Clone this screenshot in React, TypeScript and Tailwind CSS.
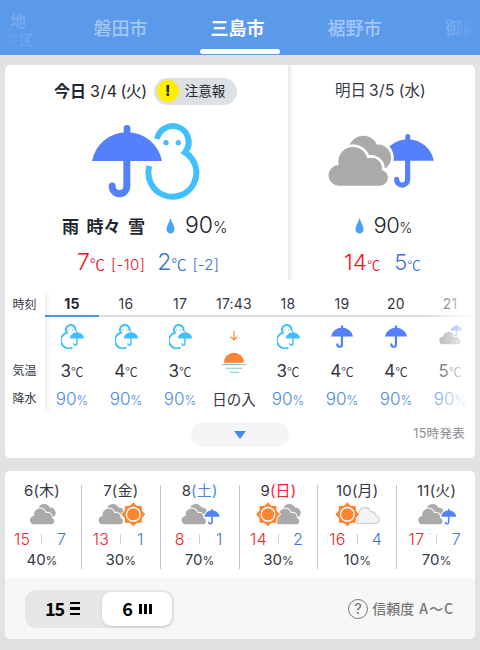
import type { ReactNode } from "react";

const SANS = "font-['Inter','Noto_Sans_CJK_JP',sans-serif]";
const CJK = "font-['Noto_Sans_CJK_JP',sans-serif]";

// Umbrella on a 210 x 218 box
function Umbrella({ x = 0, y = 0, s = 1, color = "#5580fd", outline = 0 }: {
  x?: number;
  y?: number;
  s?: number;
  color?: string;
  outline?: number;
}) {
  const canopy = "M0 109 A107 107 0 0 1 210 109Z";
  const pole = "M104.5 100 V185 a22 22 0 0 1 -44 0 V184";
  return (
    <g transform={`translate(${x} ${y}) scale(${s})`} strokeLinecap="round" fill="none">
      {outline > 0 && (
        <g stroke="#fff">
          <path d={canopy} fill="#fff" strokeWidth={outline * 2} />
          <path d={pole} strokeWidth={21 + outline * 2} />
        </g>
      )}
      <path d={canopy} fill={color} />
      <path d="M105 11 V40" stroke={color} strokeWidth="20" />
      <path d={pole} stroke={color} strokeWidth="21" />
    </g>
  );
}

// Double cloud on a 192 x 149 box
function Clouds({ x = 0, y = 0, s = 1, gap = 16 }: { x?: number; y?: number; s?: number; gap?: number }) {
  const front =
    "M31 149 A31 31 0 0 1 30 87 A44 44 0 0 1 116 67 A33 33 0 0 1 160 102 A24 24 0 0 1 156 149Z";
  return (
    <g transform={`translate(${x} ${y}) scale(${s})`} fill="#aaa">
      <path
        d="M60 34 A45 45 0 0 1 145 26 A39 39 0 0 1 172 96 L100 96Z"
        stroke="#fff"
        strokeWidth={gap}
        paintOrder="stroke"
      />
      <path d={front} stroke="#fff" strokeWidth={gap} paintOrder="stroke" />
    </g>
  );
}

// Sun centred on x, y with a radius of 36
function Sun({ x, y }: { x: number; y: number }) {
  return (
    <g transform={`translate(${x} ${y})`} fill="#fd8430">
      <path
        d="M0 -36 L10 -26 L25 -25 L26 -10 L36 0 L26 10 L25 25 L10 26 L0 36 L-10 26 L-25 25 L-26 10 L-36 0 L-26 -10 L-25 -25 L-10 -26Z"
        stroke="#fff"
        strokeWidth="5"
        paintOrder="stroke"
      />
      <circle r="20.5" fill="none" stroke="#fff" strokeWidth="4" />
    </g>
  );
}

function SnowUmbrella() {
  return (
    <svg className="ml-[2px]" width="24" height="25" viewBox="182 116 72 75">
      <path
        d="M225 137 A14.3 14.3 0 1 0 200 142 A24 24 0 1 0 216 187"
        fill="none"
        stroke="#42bffd"
        strokeWidth="6"
      />
      <circle cx="205.500" cy="134" r="2" fill="#42bffd" />
      <circle cx="216.500" cy="134" r="2" fill="#42bffd" />
      <Umbrella x={208} y={137} s={0.208} color="#42bffd" outline={9} />
    </svg>
  );
}

function RainIcon() {
  return (
    <svg width="22" height="23" viewBox="0 0 210 218">
      <Umbrella />
    </svg>
  );
}

function Sunset() {
  return (
    <svg width="26" height="45" viewBox="662 130 78 135" fill="none" strokeLinecap="round">
      <path d="M701 137 V163 M692 154 L701 163 L710 154" stroke="#fd8430" strokeWidth="3.5" />
      <path d="M671 231 A30 30 0 0 1 731 231Z" fill="#fd8430" />
      <path d="M666 236.500 H736 M677 248 H725 M689 259.500 H715" stroke="#7cc9dc" strokeWidth="3.2" />
    </svg>
  );
}

function CloudThenRain() {
  return (
    <svg className="mt-[-4px]" width="23" height="21" viewBox="596 115 70 63">
      <path d="M609 176 A11.500 11.500 0 0 1 608 153 A18 18 0 0 1 641 147 A13 13 0 0 1 655 158 A9.300 9.300 0 0 1 655 176Z" fill="#9d9d9d" />
      <Umbrella x={632} y={116} s={0.165} outline={15} />
    </svg>
  );
}

function Drop() {
  return (
    <svg width="9" height="16" viewBox="0 0 9 16">
      <path d="M4.500 0 C5.500 4 8.500 7.500 8.500 11.200 A4 4.300 0 0 1 0.500 11.200 C0.500 7.500 3.500 4 4.500 0Z" fill="#45a4f2" />
    </svg>
  );
}

const hours: { time: string; icon: ReactNode; temp?: number }[] = [
  { time: "15", icon: <SnowUmbrella />, temp: 3 },
  { time: "16", icon: <SnowUmbrella />, temp: 4 },
  { time: "17", icon: <SnowUmbrella />, temp: 3 },
  { time: "17:43", icon: <Sunset /> },
  { time: "18", icon: <SnowUmbrella />, temp: 3 },
  { time: "19", icon: <RainIcon />, temp: 4 },
  { time: "20", icon: <RainIcon />, temp: 4 },
  { time: "21", icon: <CloudThenRain />, temp: 5 },
];

interface Day {
  date: string;
  weekday: string;
  color?: string;
  icon: ReactNode;
  high: number;
  low: number;
  rain: number;
}

// Daily icons share a 150 x 75 box, drawn at a third of its size
const days: Day[] = [
  { date: "6", weekday: "木", icon: <Clouds x={39} y={6} s={0.41} />, high: 15, low: 7, rain: 40 },
  {
    date: "7",
    weekday: "金",
    icon: (
      <>
        <Clouds x={8} y={6} s={0.41} />
        <Sun x={112} y={37} />
      </>
    ),
    high: 13,
    low: 1,
    rain: 30,
  },
  {
    date: "8",
    weekday: "土",
    color: "text-[#4f86e6]",
    icon: (
      <>
        <Clouds x={20} y={6} s={0.41} />
        <Umbrella x={88} y={20} s={0.22} outline={14} />
      </>
    ),
    high: 8,
    low: 1,
    rain: 70,
  },
  {
    date: "9",
    weekday: "日",
    color: "text-[#f5222d]",
    icon: (
      <>
        <Clouds x={66} y={6} s={0.41} />
        <Sun x={45} y={37} />
      </>
    ),
    high: 14,
    low: 2,
    rain: 30,
  },
  {
    date: "10",
    weekday: "月",
    icon: (
      <>
        <path
          d="M75 64 H129 A11.500 11.500 0 0 0 132 41 A14 14 0 0 0 116 29 A18 18 0 0 0 82 28Z"
          fill="#f3f3f3"
          stroke="#d2d2d2"
          strokeWidth="4"
        />
        <Sun x={46} y={37} />
      </>
    ),
    high: 16,
    low: 4,
    rain: 10,
  },
  {
    date: "11",
    weekday: "火",
    icon: (
      <>
        <Clouds x={19} y={6} s={0.41} />
        <Umbrella x={87} y={20} s={0.22} outline={14} />
      </>
    ),
    high: 17,
    low: 7,
    rain: 70,
  },
];

function CityTabs() {
  return (
    <header className={`flex h-[55px] overflow-hidden bg-[#5b9aea] text-[18px] font-medium whitespace-nowrap text-white ${CJK}`}>
      <div className="flex w-[62px] shrink-0 flex-col pt-[11px] pl-[10px] text-[#78aaf0]">
        <span className="h-[19px] text-[16px] leading-[19px]">地</span>
        <span className="-ml-[5px] h-[18px] bg-linear-to-r from-[#5b9aea] to-[#78aaf0] to-[26px] bg-clip-text text-[14px] leading-[18px] text-transparent">
          央区
        </span>
      </div>
      <div className="flex w-[117px] shrink-0 items-center justify-center pb-px text-[#a3c6f6]">磐田市</div>
      <div className="flex w-[117px] shrink-0 flex-col items-center">
        <span className="pt-[13px] leading-[29px] font-bold">三島市</span>
        <span className="mt-[7px] ml-[5px] h-[5px] w-[80px] rounded-[3px] bg-white" />
      </div>
      <div className="flex w-[117px] shrink-0 items-center justify-center pb-px text-[#a3c6f6]">裾野市</div>
      <div className="ml-[32px] flex shrink-0 items-center bg-linear-to-r from-[#83b3f2] to-[#5b9aea] to-[32px] bg-clip-text text-transparent">
        御殿場市
      </div>
    </header>
  );
}

function Today() {
  return (
    <section className="h-[215px] w-[283px]">
      <div className="flex h-[52px] items-center pl-[49px] text-[16px] text-[#22262e]">
        <span className="font-bold">今日</span>
        <span className="ml-[4px] tracking-[0.5px]">3/4</span>
        <span className="ml-[3px] tracking-[-0.5px]">(火)</span>
        <span className="ml-[7px] flex h-[27px] w-[83px] items-center rounded-full bg-[#dde1e4] pl-[3px] text-[13.5px]">
          <span className="flex size-[22px] items-center justify-center rounded-full bg-[#ffee00] text-[15px] font-extrabold">
            !
          </span>
          <span className="ml-[6px]">注意報</span>
        </span>
      </div>
      <div className="pt-[4.500px] pl-[85px]">
        <svg width="112" height="79" viewBox="270 50 336 237">
          <path
            d="M471 101 A48 48 0 1 1 555 141 A72 72 0 1 1 448 182"
            fill="none"
            stroke="#42bffd"
            strokeWidth="18"
          />
          <circle cx="498" cy="112" r="8" fill="#42bffd" />
          <circle cx="535" cy="112" r="8" fill="#42bffd" />
          <Umbrella x={276} y={58} />
        </svg>
      </div>
      <div className="mt-[8px] flex h-[34px] items-center pl-[57px]">
        <span className={`${CJK} flex w-[104px] gap-[7.500px] text-[17px] font-bold whitespace-nowrap text-[#22262e]`}>
          <span>雨</span>
          <span>時々</span>
          <span>雪</span>
        </span>
        <Drop />
        <span className="ml-[10px] text-[23px] font-light text-[#22262e]">
          90<span className="text-[15.500px]">%</span>
        </span>
      </div>
      <div className="flex h-[36px] items-baseline pt-[2px] pl-[72px] text-[23px] leading-[34px] font-light">
        <span className="text-[#f5101c]">7</span>
        <span className={`${CJK} text-[15px] leading-none font-[350] text-[#f5101c]`}>℃</span>
        <span className="ml-[6px] text-[15px] tracking-[0.4px] text-[#f5101c]">[-10]</span>
        <span className="ml-[12px] text-[#3d6fd0]">2</span>
        <span className={`${CJK} text-[15px] leading-none font-[350] text-[#3d6fd0]`}>℃</span>
        <span className="ml-[6px] text-[15px] tracking-[0.2px] text-[#3d6fd0]">[-2]</span>
      </div>
    </section>
  );
}

function Tomorrow() {
  return (
    <section className="h-[215px] w-[187px] bg-linear-to-r from-[#e9e9e9] to-white to-[6px]">
      <div className="flex h-[52px] items-center pl-[47px] text-[15.500px] text-[#33373f]">
        明日<span className="ml-[3px] tracking-[0.4px]">3/5</span>
        <span className="ml-[4px]">(水)</span>
      </div>
      <div className="pt-[14.500px] pl-[38.500px]">
        <svg width="109" height="59" viewBox="260 80 327 177">
          <Umbrella x={424} y={85} s={0.745} />
          <Clouds x={265} y={92} />
        </svg>
      </div>
      <div className="mt-[18px] flex h-[34px] items-center pl-[67px]">
        <Drop />
        <span className="ml-[9.500px] text-[22px] font-light tracking-[-0.5px] text-[#22262e]">
          90<span className="text-[14px]">%</span>
        </span>
      </div>
      <div className="flex h-[36px] items-baseline pt-[2px] pl-[56px] text-[22px] leading-[34px] font-light">
        <span className="tracking-[0.4px] text-[#f5101c]">14</span>
        <span className={`${CJK} text-[13px] leading-none font-[350] text-[#f5101c]`}>℃</span>
        <span className="ml-[14px] text-[#3d6fd0]">5</span>
        <span className={`${CJK} text-[13px] leading-none font-[350] text-[#3d6fd0]`}>℃</span>
      </div>
    </section>
  );
}

function HourlyTable() {
  return (
    <div className="relative mt-[13px] flex h-[119px] overflow-hidden text-[#33373f]">
      <div className={`${CJK} w-[40px] shrink-0 pl-[7.500px] text-[12px] leading-[22px]`}>
        <div className="h-[66px]">時刻</div>
        <div className="h-[28px]">気温</div>
        <div>降水</div>
      </div>
      <div className="flex bg-linear-to-r from-[#efefef] to-white to-[6px]">
        {hours.map((h, i) => (
          <div key={h.time} className="flex w-[54px] shrink-0 flex-col items-center">
            <div
              className={`h-[24px] w-full border-b-2 text-center text-[14px] leading-[22px] tracking-[0.2px] ${
                i === 0 ? "border-[#4f90ec] font-bold text-[#22262e]" : "border-[#dcdcdc]"
              }`}
            >
              {h.time}
            </div>
            {h.temp === undefined ? (
              <>
                <div className="mt-[12px] h-[45px]">{h.icon}</div>
                <div className={`${CJK} mt-[11px] text-[14.500px] leading-[28px]`}>日の入</div>
              </>
            ) : (
              <>
                <div className="flex h-[39px] items-center">{h.icon}</div>
                <div className="flex h-[30px] items-baseline text-[17px] leading-[30px]">
                  {h.temp}
                  <span className={`${CJK} text-[12.500px] font-[350]`}>℃</span>
                </div>
                <div className="flex h-[26px] items-baseline text-[17px] leading-[27px] font-light text-[#4a8ae6]">
                  90<span className="text-[12.500px]">%</span>
                </div>
              </>
            )}
          </div>
        ))}
      </div>
      <div className="absolute inset-y-0 right-0 w-[46px] bg-linear-to-r from-white/10 to-white to-[95%]" />
    </div>
  );
}

function WeeklyForecast() {
  return (
    <section className="mx-[5px] mt-[13px] h-[168px] overflow-hidden rounded-[5px] bg-[#f7f7f7]">
      <div className="h-[107px] bg-white pt-[14px]">
        <div className="-mr-px -ml-[2px] grid h-[79px] grid-cols-6 divide-x divide-[#c4c6ca]">
          {days.map((d) => (
            <div key={d.date} className="flex flex-col items-center text-[#33373f]">
              <div className="h-[17px] text-[15px] leading-[11px] tracking-[0.15px] whitespace-nowrap">
                {d.date}
                <span className={d.color}>({d.weekday})</span>
              </div>
              <svg width="50" height="25" viewBox="0 0 150 75">
                {d.icon}
              </svg>
              <div className="grid w-full grid-cols-[1fr_1px_1fr] items-center text-center text-[16px] leading-[24px] font-light tracking-[0.4px]">
                <span className="text-[#f5222d]">{d.high}</span>
                <span className="h-[10px] bg-[#cfd1d4]" />
                <span className="text-[#3d74da]">{d.low}</span>
              </div>
              <div className="text-[15px] leading-[17px]">
                {d.rain}
                <span className="text-[12px]">%</span>
              </div>
            </div>
          ))}
        </div>
      </div>
      <div className="flex h-[61px] items-center justify-between pr-[21px] pl-[20px]">
        <div className={`${CJK} flex h-[38px] w-[149px] rounded-[11px] bg-[#e6e6e7] p-[2px] text-[18px] font-bold text-black`}>
          <button className="flex w-[75px] items-center gap-[7px] pl-[18px]">
            <span className="w-[18px] tracking-[-1px]">15</span>
            <span className="flex flex-col gap-[3px]">
              <span className="h-[2.500px] w-[10px] bg-black" />
              <span className="h-[2.500px] w-[10px] bg-black" />
              <span className="h-[2.500px] w-[10px] bg-black" />
            </span>
          </button>
          <button className="flex w-[70px] items-center justify-center gap-[6px] rounded-[9px] bg-white shadow">
            6
            <span className="flex gap-[2px]">
              <span className="h-[10px] w-[3px] bg-black" />
              <span className="h-[10px] w-[3px] bg-black" />
              <span className="h-[10px] w-[3px] bg-black" />
            </span>
          </button>
        </div>
        <div className="flex items-center gap-[4px] text-[#777]">
          <span className="flex size-[20px] items-center justify-center rounded-full border-[1.500px] border-[#777] text-[14px] font-medium">
            ?
          </span>
          <span className={`${CJK} text-[14px] font-medium whitespace-nowrap`}>
            信頼度<span className="ml-[5px] tracking-[1px]">A〜C</span>
          </span>
        </div>
      </div>
    </section>
  );
}

export default function App() {
  return (
    <div className={`h-[650px] w-[480px] overflow-hidden bg-[#e2e2e2] ${SANS}`}>
      <CityTabs />
      <main>
        <section className="mx-[5px] mt-[10px] h-[393px] overflow-hidden rounded-[5px] bg-white">
          <div className="flex">
            <Today />
            <Tomorrow />
          </div>
          <HourlyTable />
          <div className="mt-[10px] grid h-[25px] grid-cols-3 items-center px-[10px]">
            <button className="col-start-2 flex h-[25px] w-[98px] items-center justify-center justify-self-center rounded-full bg-[#f5f5f5]">
              <svg width="12" height="8" viewBox="0 0 12 8">
                <path d="M0 0 H12 L6 8Z" fill="#4a8af0" />
              </svg>
            </button>
            <span className="justify-self-end text-[12.500px] tracking-[0.3px] text-[#8c8c92]">15時発表</span>
          </div>
        </section>
        <WeeklyForecast />
      </main>
    </div>
  );
}
